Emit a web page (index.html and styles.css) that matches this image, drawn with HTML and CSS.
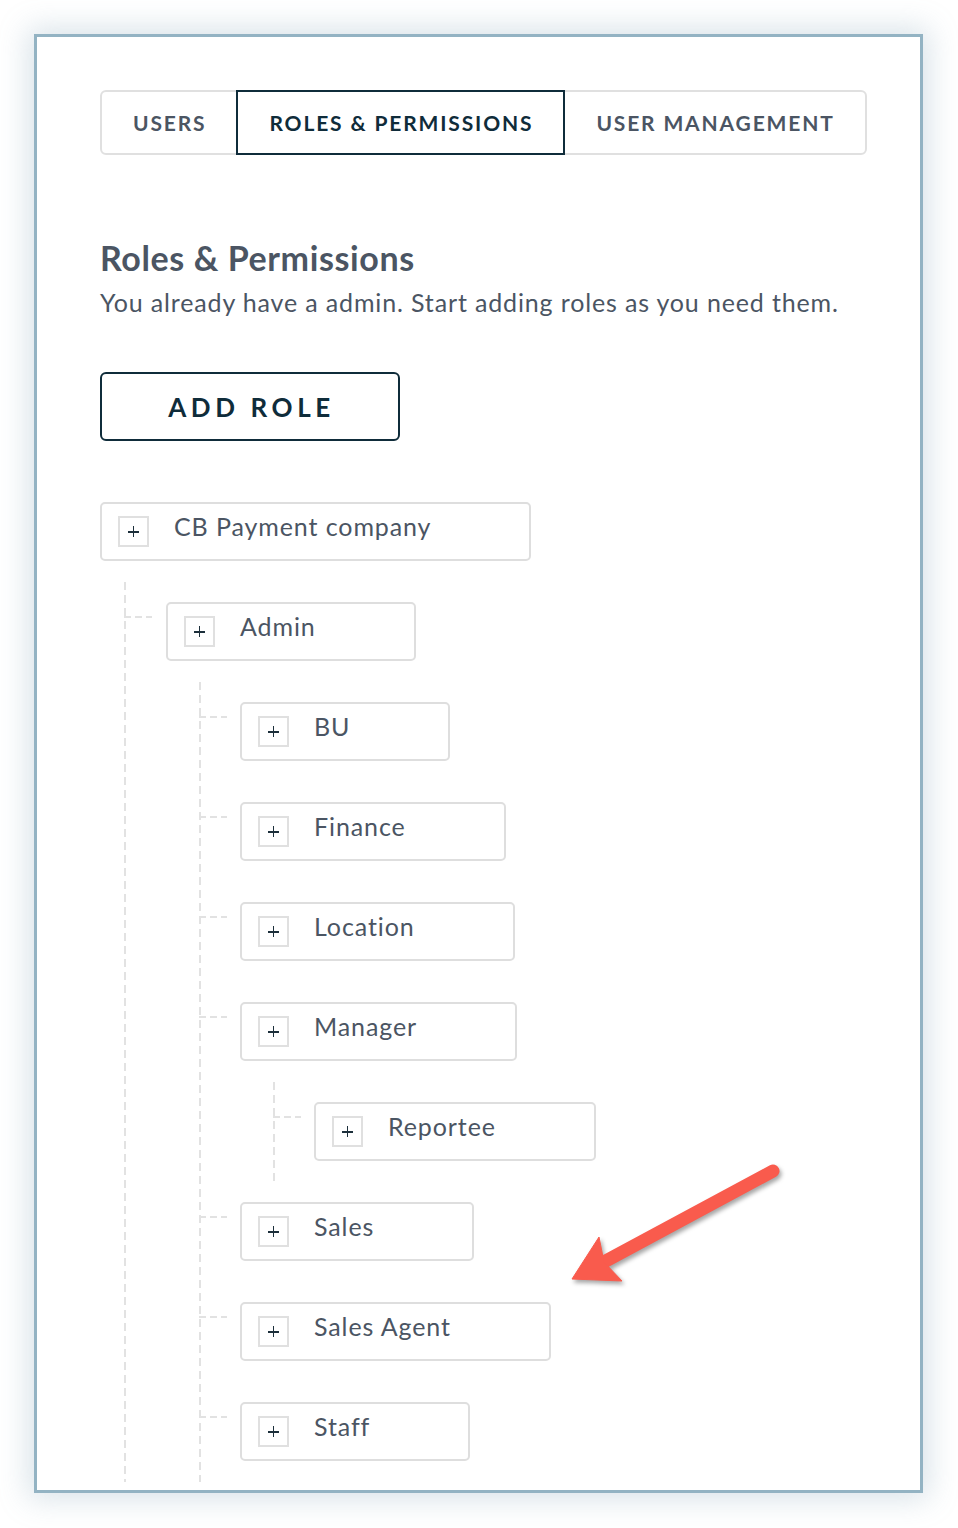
FILE: index.html
```html
<!DOCTYPE html>
<html lang="en">
<head>
<meta charset="utf-8">
<title>Roles &amp; Permissions</title>
<link rel="stylesheet" href="styles.css">
</head>
<body>
<div class="frame">
  <nav class="tabs">
    <div class="tab">USERS</div>
    <div class="tab active">ROLES &amp; PERMISSIONS</div>
    <div class="tab">USER MANAGEMENT</div>
  </nav>
  <h1 class="title">Roles &amp; Permissions</h1>
  <p class="sub">You already have a admin. Start adding roles as you need them.</p>
  <button class="add">ADD ROLE</button>

  <ul class="tree">
    <li class="root-item">
      <div class="node"><span class="plus"></span><span class="label">CB Payment company</span></div>
      <ul class="children first">
        <li>
          <div class="node"><span class="plus"></span><span class="label">Admin</span></div>
          <ul class="children">
            <li><div class="node"><span class="plus"></span><span class="label">BU</span></div></li>
            <li><div class="node"><span class="plus"></span><span class="label">Finance</span></div></li>
            <li><div class="node"><span class="plus"></span><span class="label">Location</span></div></li>
            <li>
              <div class="node"><span class="plus"></span><span class="label">Manager</span></div>
              <ul class="children">
                <li><div class="node"><span class="plus"></span><span class="label">Reportee</span></div></li>
              </ul>
            </li>
            <li><div class="node"><span class="plus"></span><span class="label">Sales</span></div></li>
            <li><div class="node"><span class="plus"></span><span class="label">Sales Agent</span></div></li>
            <li><div class="node"><span class="plus"></span><span class="label">Staff</span></div></li>
          </ul>
        </li>
      </ul>
    </li>
  </ul>
</div>

<svg class="arrow" width="240" height="150" viewBox="560 1150 240 150" xmlns="http://www.w3.org/2000/svg">
  <g fill="#f95b4d" stroke="#f95b4d">
    <line x1="773" y1="1171" x2="602" y2="1263" stroke-width="13" stroke-linecap="round"/>
    <polygon points="572,1279 599,1237 604,1262 622,1281" stroke-width="1" stroke-linejoin="round"/>
  </g>
</svg>
</body>
</html>
```

FILE: styles.css
```css
* { box-sizing: border-box; }

html, body {
  margin: 0;
  padding: 0;
  background: #ffffff;
}

body {
  position: relative;
  width: 958px;
  height: 1528px;
  overflow: hidden;
  font-family: Lato, "Open Sans", "Liberation Sans", sans-serif;
  color: #4b5563;
}

.frame {
  margin: 34px 35px 0 34px;
  width: 889px;
  height: 1459px;
  border: 3px solid #93b3c3;
  background: #fff;
  overflow: hidden;
  padding: 53px 0 0 63px;
  box-shadow: 0 0 28px 6px rgba(120, 155, 175, 0.28);
}

/* Tabs */
.tabs {
  display: flex;
  height: 65px;
}

.tab {
  display: flex;
  align-items: center;
  justify-content: center;
  height: 65px;
  padding: 0 30px 0 31px;
  border: 2px solid #e0e0e0;
  margin-left: -2px;
  font-size: 21px;
  font-weight: 700;
  letter-spacing: 1.85px;
  color: #4b5563;
  background: #fff;
}

.tab:first-child {
  margin-left: 0;
  border-radius: 6px 0 0 6px;
}

.tab:last-child {
  border-radius: 0 6px 6px 0;
}

.tab.active {
  position: relative;
  z-index: 1;
  border-color: #0f2c3a;
  color: #0f2c3a;
  border-radius: 0;
}

/* Header */
.title {
  margin: 83px 0 0 0;
  font-size: 34px;
  line-height: 40px;
  font-weight: 700;
  letter-spacing: 0.6px;
  color: #4b5563;
}

.sub {
  margin: 9px 0 0 0;
  font-size: 25px;
  line-height: 30px;
  letter-spacing: 0.85px;
  color: #4b5563;
}

.add {
  display: block;
  margin: 55px 0 0 0;
  width: 300px;
  height: 69px;
  border: 2px solid #0f2c3a;
  border-radius: 6px;
  background: #fff;
  color: #0f2c3a;
  font-family: inherit;
  font-size: 26px;
  font-weight: 700;
  letter-spacing: 4.6px;
  padding: 0 0 0 3px;
}

/* Tree */
.tree,
.children {
  list-style: none;
  margin: 0;
  padding: 0;
}

.tree {
  margin-top: 61px;
}

.tree li {
  display: flow-root;
}

.node {
  display: flex;
  width: max-content;
  align-items: flex-start;
  height: 59px;
  border: 2px solid #dedede;
  border-radius: 5px;
  padding: 0 98px 0 16px;
  margin-bottom: 21px;
  background: #fff;
}

.plus {
  position: relative;
  flex: none;
  width: 31px;
  height: 31px;
  margin-top: 12px;
  border: 2px solid #e0e0e0;
}

.plus::before,
.plus::after {
  content: "";
  position: absolute;
  background: #1c2f3b;
}

.plus::before {
  left: 8px;
  top: 13px;
  width: 11px;
  height: 1.6px;
}

.plus::after {
  left: 12.7px;
  top: 8.3px;
  width: 1.6px;
  height: 11px;
}

.label {
  margin: 7px 0 0 25px;
  font-size: 25px;
  line-height: 30px;
  letter-spacing: 0.9px;
  color: #4b5563;
  white-space: nowrap;
}

.children {
  margin-left: 33px;
  background: repeating-linear-gradient(to bottom, #e2e2e2 0 8px, transparent 8px 13px) left top / 2px 100% no-repeat;
}

.children.first {
  margin-left: 24px;
}

.children > li {
  position: relative;
  padding: 20px 0 0 41px;
}

.children.first > li {
  padding-left: 42px;
}

.children > li::before {
  content: "";
  position: absolute;
  left: 0;
  top: 34px;
  width: 28px;
  height: 2px;
  background: repeating-linear-gradient(to right, #e2e2e2 0 7px, transparent 7px 11px);
}

/* Annotation arrow */
.arrow {
  position: absolute;
  left: 560px;
  top: 1150px;
  filter: drop-shadow(2px 3px 2px rgba(0, 0, 0, 0.35));
}
```
